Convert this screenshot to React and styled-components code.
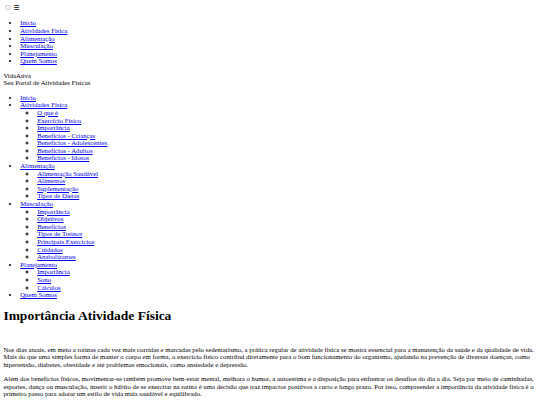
import React from "react";
import styled, { createGlobalStyle } from "styled-components";

const GlobalStyle = createGlobalStyle`
  html {
    zoom: 0.421875;
  }
  body {
    margin: 8px;
    font-family: "Liberation Serif", "Times New Roman", serif;
    font-size: 16px;
    line-height: 18px;
    color: #000;
    background: #fff;
  }
`;

const Header = styled.header`
  display: block;
`;

const ToggleRow = styled.div`
  display: block;
`;

const Toggle = styled.input`
  margin: 3px 3px 3px 4px;
  vertical-align: baseline;
`;

const ToggleLabel = styled.label`
  font-family: "DejaVu Sans", sans-serif;
  font-size: 16px;
`;

const List = styled.ul`
  margin: ${(p) => (p.$nested ? "0" : "16px 0")};
  padding-left: 40px;
  list-style-type: ${(p) => (p.$nested ? "circle" : "disc")};
`;

const Item = styled.li`
  display: list-item;
`;

const Link = styled.a`
  color: #0000ee;
  text-decoration: underline;
`;

const Brand = styled.div`
  display: block;
`;

const Main = styled.main`
  display: block;
`;

const Title = styled.h1`
  font-size: 32px;
  line-height: 37px;
  font-weight: bold;
  margin: 21px 0;
`;

const Spacer = styled.div`
  height: 16px;
`;

const Paragraph = styled.p`
  margin: 16px 0;
`;

const topNav = [
  "Início",
  "Atividades Física",
  "Alimentação",
  "Musculação",
  "Planejamento",
  "Quem Somos",
];

const menu = [
  { label: "Início" },
  {
    label: "Atividades Física",
    sub: [
      "O que é",
      "Exercício Físico",
      "Importância",
      "Benefícios - Crianças",
      "Benefícios - Adolescentes",
      "Benefícios - Adultos",
      "Benefícios - Idosos",
    ],
  },
  {
    label: "Alimentação",
    sub: ["Alimentação Saudável", "Alimentos", "Suplementação", "Tipos de Dietas"],
  },
  {
    label: "Musculação",
    sub: [
      "Importância",
      "Objetivos",
      "Benefícios",
      "Tipos de Treinos",
      "Principais Exercícios",
      "Cuidados",
      "Anabolizantes",
    ],
  },
  { label: "Planejamento", sub: ["Importância", "Sono", "Cálculos"] },
  { label: "Quem Somos" },
];

export default function App() {
  return (
    <>
      <GlobalStyle />
      <Header>
        <ToggleRow>
          <Toggle type="checkbox" id="menu-toggle" />{" "}
          <ToggleLabel htmlFor="menu-toggle">☰</ToggleLabel>
        </ToggleRow>
        <nav>
          <List>
            {topNav.map((t) => (
              <Item key={t}>
                <Link href="#">{t}</Link>
              </Item>
            ))}
          </List>
        </nav>
        <Brand>
          VidaAtiva
          <br />
          Seu Portal de Atividades Físicas
        </Brand>
        <nav>
          <List>
            {menu.map((m) => (
              <Item key={m.label}>
                <Link href="#">{m.label}</Link>
                {m.sub && (
                  <List $nested>
                    {m.sub.map((s) => (
                      <Item key={s}>
                        <Link href="#">{s}</Link>
                      </Item>
                    ))}
                  </List>
                )}
              </Item>
            ))}
          </List>
        </nav>
      </Header>
      <Main>
        <Title>Importância Atividade Física</Title>
        <Spacer />
        <Paragraph>
          Nos dias atuais, em meio a rotinas cada vez mais corridas e marcadas pelo sedentarismo, a prática regular de atividade física se mostra essencial para a manutenção da saúde e da qualidade de vida. Mais do que uma simples forma de manter o corpo em forma, o exercício físico contribui diretamente para o bom funcionamento do organismo, ajudando na prevenção de diversas doenças, como hipertensão, diabetes, obesidade e até problemas emocionais, como ansiedade e depressão.
        </Paragraph>
        <Paragraph>
          Além dos benefícios físicos, movimentar-se também promove bem-estar mental, melhora o humor, a autoestima e a disposição para enfrentar os desafios do dia a dia. Seja por meio de caminhadas, esportes, dança ou musculação, inserir o hábito de se exercitar na rotina é uma decisão que traz impactos positivos a curto e longo prazo. Por isso, compreender a importância da atividade física é o primeiro passo para adotar um estilo de vida mais saudável e equilibrado.
        </Paragraph>
      </Main>
    </>
  );
}
